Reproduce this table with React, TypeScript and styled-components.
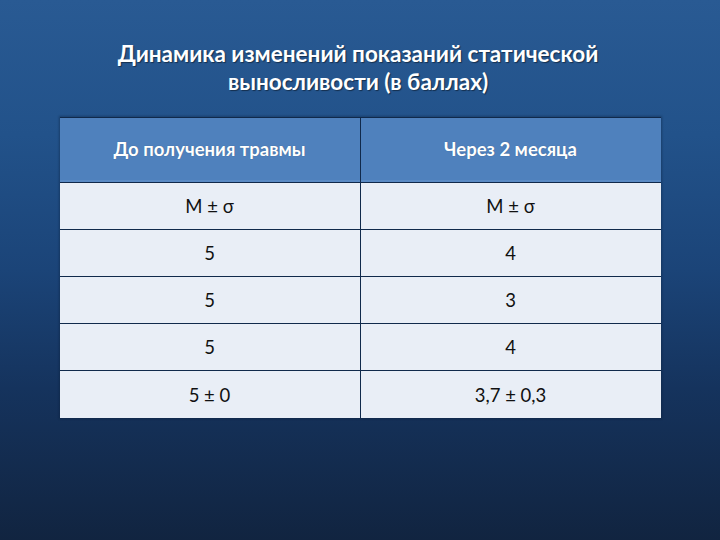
import React from "react";
import styled, { createGlobalStyle } from "styled-components";

const Global = createGlobalStyle`
  html, body { margin: 0; padding: 0; }
  body { width: 720px; height: 540px; overflow: hidden; }
`;

const Slide = styled.div`
  width: 720px;
  height: 540px;
  box-sizing: border-box;
  background: linear-gradient(180deg, #295a93 0%, #22528a 25%, #1b4478 50%, #15335d 72%, #112440 100%);
  display: flex;
  flex-direction: column;
  align-items: center;
  padding-top: 40px;
  font-family: Lato, "Open Sans", sans-serif;
`;

const Title = styled.h1`
  margin: 0;
  width: 640px;
  color: #ffffff;
  font-size: 22.5px;
  line-height: 28px;
  font-weight: 700;
  text-align: center;
  text-shadow: 1px 1px 1px rgba(0, 0, 0, 0.45);
  margin-left: -4px;
`;

const Table = styled.div`
  margin-top: 21px;
  width: 601px;
  display: grid;
  grid-template-columns: 301px 300px;
  border-top: 1px solid #10294b;
  box-shadow: 0 0 2px 1px rgba(10, 25, 50, 0.35);
`;

const HeadCell = styled.div<{ $last?: boolean }>`
  height: 65px;
  box-sizing: border-box;
  padding-bottom: 2px;
  background: #4f81bd;
  color: #ffffff;
  font-size: 18.5px;
  font-weight: 700;
  display: flex;
  align-items: center;
  justify-content: center;
  border-right: ${(p) => (p.$last ? "none" : "1px solid #10294b")};
  border-bottom: 1px solid #10294b;
  box-shadow: inset 0 -2px 0 #5a8ac4;
  text-shadow: 0 0 1px rgba(0, 0, 0, 0.3);
`;

const Cell = styled.div<{ $last?: boolean; $lastRow?: boolean }>`
  height: ${(p) => (p.$lastRow ? "47px" : "46px")};
  background: #e9eef6;
  color: #111111;
  font-size: 18.5px;
  display: flex;
  align-items: center;
  justify-content: center;
  border-right: ${(p) => (p.$last ? "none" : "1px solid #10294b")};
  border-bottom: ${(p) => (p.$lastRow ? "none" : "1px solid #10294b")};
`;

const rows: [string, string][] = [
  ["M ± σ", "M ± σ"],
  ["5", "4"],
  ["5", "3"],
  ["5", "4"],
  ["5 ± 0", "3,7 ± 0,3"],
];

export default function App() {
  return (
    <>
      <Global />
      <Slide>
        <Title>
          Динамика изменений показаний статической
          <br />
          выносливости (в баллах)
        </Title>
        <Table>
          <HeadCell>До получения травмы</HeadCell>
          <HeadCell $last>Через 2 месяца</HeadCell>
          {rows.map((r, i) => (
            <React.Fragment key={i}>
              <Cell $lastRow={i === rows.length - 1}>{r[0]}</Cell>
              <Cell $last $lastRow={i === rows.length - 1}>
                {r[1]}
              </Cell>
            </React.Fragment>
          ))}
        </Table>
      </Slide>
    </>
  );
}
